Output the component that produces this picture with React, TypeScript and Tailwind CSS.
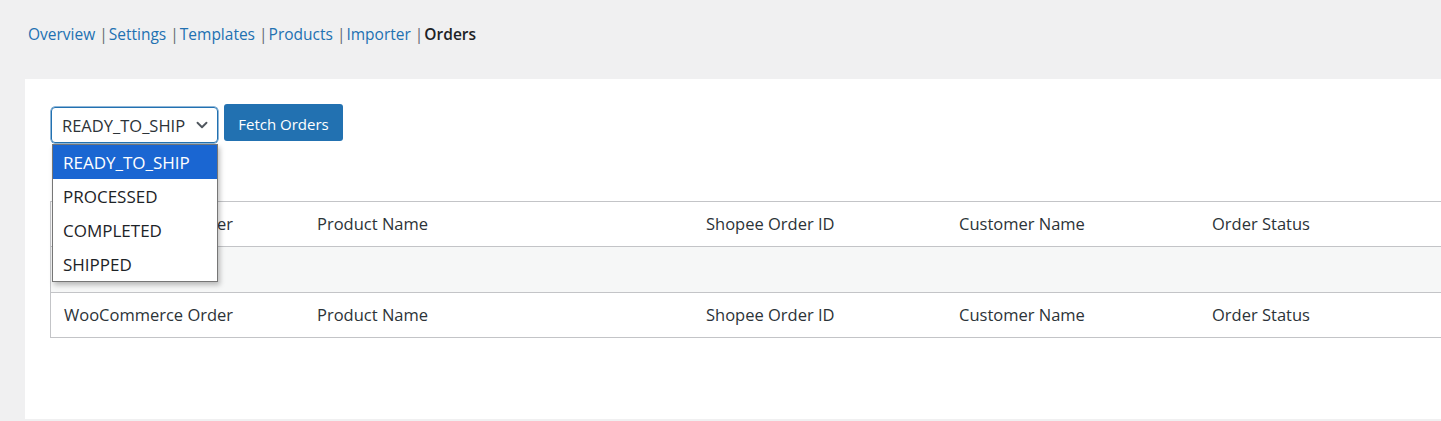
import { ChevronDown } from "lucide-react";

const navItems = ["Overview", "Settings", "Templates", "Products", "Importer"];
const statuses = ["READY_TO_SHIP", "PROCESSED", "COMPLETED", "SHIPPED"];
const columns = [
  { label: "WooCommerce Order", w: "w-[253px]" },
  { label: "Product Name", w: "w-[389px]" },
  { label: "Shopee Order ID", w: "w-[253px]" },
  { label: "Customer Name", w: "w-[253px]" },
  { label: "Order Status", w: "w-[253px]" },
];

function Row({ cells, shaded }: { cells: boolean; shaded?: boolean }) {
  return (
    <div
      className={`flex items-center border-b border-[#c3c4c7] ${
        shaded ? "bg-[#f6f7f7] h-[46px]" : "bg-white h-[45px]"
      }`}
    >
      {columns.map((c) => (
        <div key={c.label} className={`${c.w} shrink-0 pl-[13px] text-[16.5px] text-[#2c3338]`}>
          {cells ? c.label : ""}
        </div>
      ))}
    </div>
  );
}

export default function App() {
  return (
    <div
      className="w-[1441px] h-[421px] overflow-hidden bg-[#f0f0f1]"
      style={{ fontFamily: '"Segoe UI", "Open Sans", "Noto Sans", sans-serif' }}
    >
      <nav className="h-[79px] pl-[28px] pt-[24px] text-[15.5px] leading-[21px]">
        {navItems.map((item, i) => (
          <span key={item}>
            {i > 0 && <span className="mr-[1px] text-[#646970]">|</span>}
            <span className="text-[#2271b1]">{item}</span>{" "}
          </span>
        ))}
        <span className="mr-[1px] text-[#646970]">|</span>
        <span className="font-semibold text-[#1d2327]">Orders</span>
      </nav>

      <div className="ml-[25px] h-[340px] w-[1430px] bg-white pt-[25px] pl-[25px]">
        <div className="relative flex items-start gap-[6px]">
          <div className="ml-[1px] mt-[3px] flex h-[36px] w-[167px] items-center justify-between rounded-[4px] border border-[#2271b1] pl-[10px] pr-[6px] text-[16.5px] text-[#2c3338] shadow-[0_0_0_0.5px_#2271b1]">
            <span className="pt-[3px]">READY_TO_SHIP</span>
            <ChevronDown className="h-[18px] w-[18px] text-[#50575e]" strokeWidth={2.5} />
          </div>
          <button className="h-[37px] w-[119px] rounded-[3px] bg-[#2271b1] pt-[3px] text-[15px] text-white">
            Fetch Orders
          </button>

          <div className="absolute left-[2px] top-[40px] z-10 w-[166px] border border-[#767676] bg-white shadow-[2px_3px_5px_rgba(0,0,0,0.25)]">
            {statuses.map((s, i) => (
              <div
                key={s}
                className={`flex h-[34px] items-center pl-[10px] pt-[2px] text-[17px] ${
                  i === 0 ? "bg-[#1a66d2] text-white" : "text-[#1d2327]"
                }`}
              >
                {s}
              </div>
            ))}
          </div>
        </div>

        <div className="mt-[58px] w-[1420px] border-l border-t border-[#c3c4c7]">
          <Row cells />
          <Row cells={false} shaded />
          <Row cells />
        </div>
      </div>
    </div>
  );
}
